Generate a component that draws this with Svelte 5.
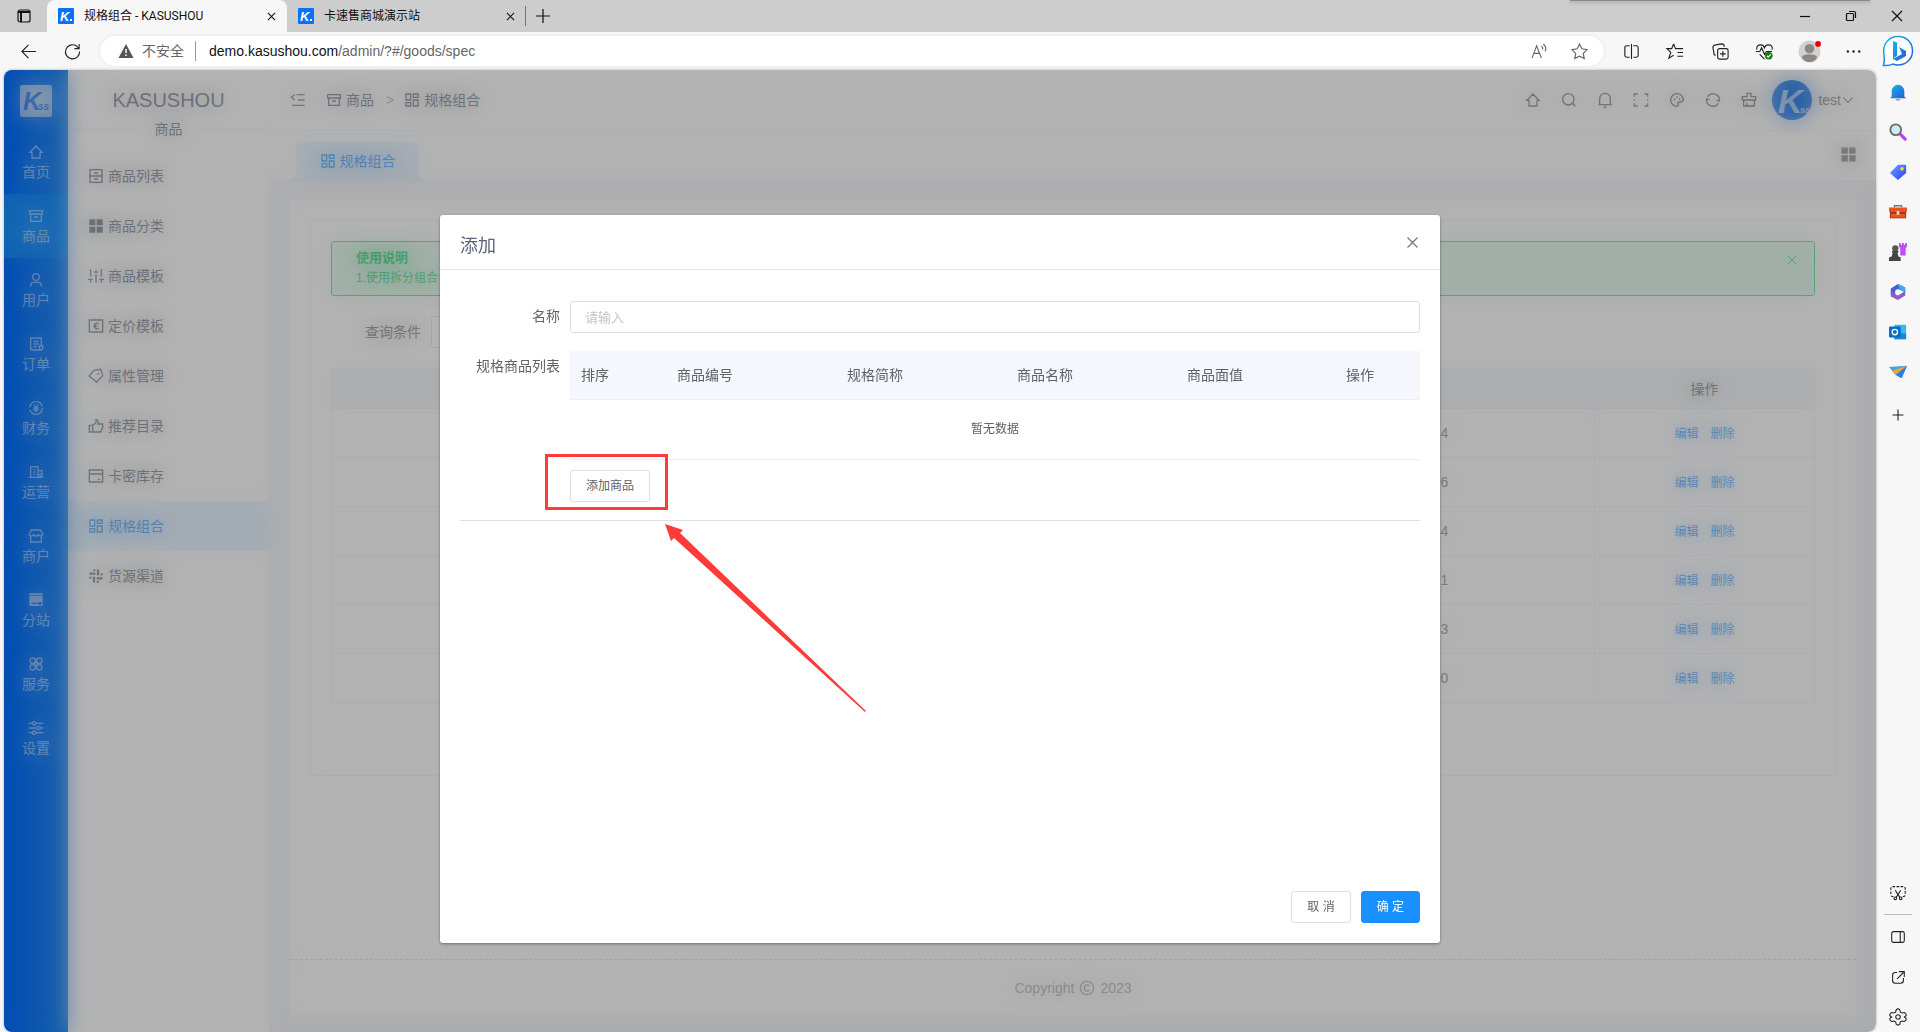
<script>
  const icons = {
    home: '<path d="M3 12.500 12 3l9 9.500h-3V21H6v-8.500z"/>',
    archive: '<path d="M2.500 4h19v5h-19zM4 9v11h16V9M9 13.500h6"/>',
    user: '<circle cx="12" cy="7.500" r="5"/><path d="M4 22v-2q0-4.500 4.500-4.500h7Q20 15.500 20 20v2"/>',
    order: '<path d="M20 15V3H4v15q0 3 3 3h12q3 0 3-3v-3h-5v3q0 3 2 3M8 8h8M8 12h8M8 16h5"/>',
    money: '<circle cx="12" cy="12" r="9.500" stroke-dasharray="26 4"/><path d="m8.500 7 3.500 4 3.500-4M12 11v7M8 12h8M8 15h8"/>',
    building: '<path d="M1 20h22M4 20V4h11v16M15 10h6v10M8 8h3M8 12h3M8 16h3M18 14v6"/>',
    store: '<path d="M4 11v10h16V11M5 3h14l3 6q0 3-3 3t-3.500-3q0 3-3.500 3T8.500 9q0 3-3.500 3T2 9z"/>',
    station: '<path fill="currentColor" stroke="none" d="M2 2h20v3H2zM2 6h20v15H2z"/><path stroke="#1380fb" d="M5 17h9M16 16h3v2h-3z"/>',
    command: '<circle cx="7" cy="7" r="4"/><circle cx="17" cy="7" r="4"/><circle cx="7" cy="17" r="4"/><circle cx="17" cy="17" r="4"/><path d="M10 10h4v4h-4z"/>',
    sliders: '<path d="M1 5h5m6 0h11M1 12h12m6 0h4M1 19h5m6 0h11"/><circle cx="9" cy="5" r="2.500"/><circle cx="16" cy="12" r="2.500"/><circle cx="9" cy="19" r="2.500"/>',
    drawers: '<path d="M3 2.500h18v19H3zM3 12h18M9 7.500h6M9 16.500h6"/>',
    grid: '<path fill="currentColor" stroke="none" d="M2 2h9v9H2zM13 2h9v9h-9zM2 13h9v9H2zM13 13h9v9h-9z"/>',
    equalizer: '<path d="M4 2v11M4 18v4M0 17h7M12 2v1M12 9v13M9 6h6M20 2v11M20 18v4M17 17h7"/>',
    price: '<path d="M2 3h20v18H2zM16 9q-5-3.500-6.500 3 1.500 6.500 6.500 3M8 12h6"/>',
    tag: '<path d="M1.500 12 9 3.500l10-1.500 3 9.500-9 9.500zM15 7.500v2.500"/>',
    thumb: '<path d="M2 11h5v10H2zM7 11l5-4V2q4 0 3 7h7v5l-3 7H7"/>',
    card: '<path d="M2 3h20v18H2zM2 9h20M15 17h3"/>',
    blocks: '<path d="M3 3h7v9H3zM14 3h7v5h-7zM3 16h7v5H3zM14 12h7v9h-7z"/>',
    slack: '<path stroke-width="3.500" stroke-linecap="round" d="M9.500 8.500h-6M9.500 3.500h.1M15 3.500v6M20.500 9.500h.1M14.500 15.500h6M14.500 20.500h.1M9 14.500v6M3.500 14.500h.1"/>',
    fold: '<path d="M10 4h12M12 12h10M3 20h19M7 4 2 8l5 4"/>',
    search: '<circle cx="11" cy="11" r="8.500"/><path d="m17 17 4.500 4.500"/>',
    bell: '<path d="M4 19V10a8 8 0 0 1 16 0v9M2 19h20M10 22.500h4"/>',
    full: '<path d="M2 7V3h5M17 3h5v4M22 17v4h-5M7 21H2v-4M2 11v2M22 11v2"/>',
    palette: '<path d="M12 2.500a9.500 9.500 0 0 1 9.500 8.500q0 4-4.500 4h-2q-2.500 0-1 3 0 3.500-2 3.500A9.500 9.500 0 0 1 12 2.500zM8 10v2.500M12 6.500V9M16 9v2.500"/>',
    refresh: '<path d="M4 7a9.500 9.500 0 0 1 17.500 6M20 17a9.500 9.500 0 0 1-17.500-6M2 14l1-4 4 2M22 10l-1 4-4-2"/>',
    brush: '<path d="M9 7V2h6v5h7v5H2V7zM4 12v9h16v-9M9 21v-5"/>',
    down: '<path d="m4 8 8 8 8-8"/>',
    close: '<path d="m4 4 16 16M20 4 4 20"/>'
  };
  const nav = [
    ['home', '首页'], ['archive', '商品'], ['user', '用户'], ['order', '订单'], ['money', '财务'],
    ['building', '运营'], ['store', '商户'], ['station', '分站'], ['command', '服务'], ['sliders', '设置']
  ];
  const sub = [
    ['drawers', '商品列表'], ['grid', '商品分类'], ['equalizer', '商品模板'], ['price', '定价模板'], ['tag', '属性管理'],
    ['thumb', '推荐目录'], ['card', '卡密库存'], ['blocks', '规格组合'], ['slack', '货源渠道']
  ];
  const tools = [
    ['home', '首页'], ['search', '搜索'], ['bell', '通知'], ['full', '全屏'],
    ['palette', '主题'], ['refresh', '刷新'], ['brush', '清理']
  ];
  const rows = [4, 6, 4, 1, 3, 0];
  const columns = ['排序', '商品编号', '规格简称', '商品名称', '商品面值', '操作'];
  const tabs = [['规格组合 - KASUSHOU', true], ['卡速售商城演示站', false]];
  const apps = ['通知', '搜索', '购物', '工具', '游戏', 'Microsoft 365', 'Outlook', 'Drop'];
  const appArt = [
    '<path fill="url(#blue)" d="M3 15V9a7 7 0 0 1 14 0v6l2 2H1z"/><path fill="#777" d="M7 18h6q-3 3-6 0z"/>',
    '<path stroke="#c23cf0" stroke-width="3.500" stroke-linecap="round" d="m13 13 5 5"/><circle cx="7.500" cy="7.500" r="6" fill="#cdeafb" stroke="#666" stroke-width="2"/>',
    '<path fill="url(#indigo)" d="m1 11 9-9h8q1 0 1 1v8l-9 8z"/><circle cx="14.500" cy="6.500" r="2" fill="#ffd34d"/>',
    '<path stroke="#777" stroke-width="1.500" d="M6 5V3h8v2"/><path fill="#a92c10" d="M1 9h18v8H1z"/><path fill="#e8551d" d="M0 5h20v5H0zM2 12h16v4H2z"/><path fill="#ddd" d="M8.500 9h3v4h-3z"/>',
    '<path fill="#c04df5" d="M11 0h2v2h1.500V0h2v2H18V0h2v4l-1.500 2v8h-6V6L11 4z"/><circle cx="7" cy="6" r="3.500" fill="#555"/><path fill="#444" d="M3 9h8l-1.500 2 1 4 2.500 1v4H0v-4l3-1 1-4z"/>',
    '<path fill="#4b5fd0" d="m10 1 8 4v5l-8-3-3 2v6l-5-3V6z"/><path fill="#38b0ee" d="m10 1 8 4v6l-6-4z"/><path fill="#8d5bd0" d="M18 9v5l-8 5-8-4V8l4 4 4 2z"/><circle cx="10" cy="10" r="3" fill="#f7f7f7"/>',
    '<path fill="#35b8f1" d="M6 2h13v16H6z"/><path fill="#1686d9" d="m6 11 13 1v6H6z"/><rect y="4" width="13" height="12" rx="1" fill="#0a6cc9"/><circle cx="6.500" cy="10" r="3" stroke="#fff" stroke-width="1.500"/>',
    '<path fill="#3ba4ee" d="M0 4.500 20 3l-6 14-6-3z"/><path fill="#f5a623" d="M3 9 20 3 7 13z"/><path fill="#2b7de9" d="M8 13 20 3l-6 14z"/>'
  ];
  const bar = [
    ['分屏', '<path d="M8 4H5Q3 4 3 6v8q0 2 2 2h3M12 4h3q2 0 2 2v8q0 2-2 2h-3M10 2v16"/>'],
    ['收藏夹', '<path d="m8 2 2 5h8M8 2 6 7H1l4 4-2 6 5-3M12 11h6M12 15h6"/>'],
    ['集锦', '<rect x="7" y="7" width="11" height="11" rx="2"/><path d="M12.500 9.500v6M9.500 12.500h6M5 14q-2 0-2-3L2 6q0-3 3-3l6-1q3 0 3 3"/>'],
    ['性能', '<path d="M2 8q-1-5 4-5 3 0 4 3 1-3 4-3 5 0 4 5M1 10h4l2-4 3 7 2-3h6M5 13l5 5"/><circle cx="14.500" cy="14.500" r="4" fill="#107c10" stroke="none"/><path stroke="#fff" d="m12.500 14.500 1.500 1.500 2.500-3"/>'],
    ['用户', '<circle cx="10" cy="10" r="11.500" fill="#d3d1cf" stroke="none"/><circle cx="10" cy="7" r="5" fill="#8b8785" stroke="none"/><path fill="#8b8785" stroke="none" d="M2 16q1-3 8-3t8 3q-2 5-8 5t-8-5z"/><circle cx="19" cy="2" r="3" fill="#e80000" stroke="none"/>'],
    ['更多', '<path stroke-width="2.500" stroke-linecap="round" d="M4 10h.1M10 10h.1M16 10h.1"/>']
  ];
</script>

{#snippet icon(name)}
  <svg class="icon" viewBox="0 0 24 24" aria-hidden="true">{@html icons[name]}</svg>
{/snippet}

{#snippet fav()}
  <svg class="fav" viewBox="0 0 16 16" aria-hidden="true">
    <rect width="16" height="16" rx="1" fill="#0b72f5" />
    <text x="2" y="13" font-size="13" class="k" fill="#fff">K</text>
    <path fill="#fff" d="M12 11h2v2h-2z" />
  </svg>
{/snippet}

<div class="window">
  <header class="strip">
    <button class="pane" aria-label="标签操作">
      <svg viewBox="0 0 16 16" class="line"><rect x="2" y="2" width="12" height="12" rx="2" /><path d="M2 4h12M5 5v9" stroke-width="2" /></svg>
    </button>
    {#each tabs as [title, active]}
      <div class="tab" class:active>
        {@render fav()}
        <span>{title}</span>
        <button aria-label="关闭标签页"><svg viewBox="0 0 10 10" class="line"><path d="m1 1 8 8M9 1 1 9" /></svg></button>
      </div>
    {/each}
    <button class="plus" aria-label="新建标签页"><svg viewBox="0 0 14 14" class="line"><path d="M7 0v14M0 7h14" /></svg></button>
    <i class="notch"></i>
    <div class="controls">
      <button aria-label="最小化"><svg viewBox="0 0 10 10" class="line"><path d="M0 5.500h10" /></svg></button>
      <button aria-label="还原"><svg viewBox="0 0 10 10" class="line"><rect x=".5" y="2.500" width="7" height="7" rx="1" /><path d="M3 .5h5q1.500 0 1.500 1.500v5" /></svg></button>
      <button aria-label="关闭"><svg viewBox="0 0 10 10" class="line"><path d="m0 0 10 10M10 0 0 10" /></svg></button>
    </div>
  </header>

  <div class="toolbar">
    <button class="back" aria-label="后退"><svg viewBox="0 0 18 18" class="line"><path d="M17 9H2M9 2 2 9l7 7" /></svg></button>
    <button class="back" aria-label="刷新"><svg viewBox="0 0 18 18" class="line"><path d="M16.500 9A7.500 7.500 0 1 1 13 3l3 3M16 1v5h-5" /></svg></button>
    <div class="address">
      <svg class="warn" viewBox="0 0 16 16"><path fill="#555" d="M8 1 15.500 15H.5z" /><path stroke="#fff" stroke-width="1.500" d="M8 6v4M8 11.500V13" /></svg>
      <span class="unsafe">不安全</span>
      <span class="url"><b>demo.kasushou.com</b>/admin/?#/goods/spec</span>
      <button aria-label="大声朗读"><svg viewBox="0 0 18 18" class="line"><path d="M1 16 6 3l5 13M3 11h6M11 3q2 2 1 4M13 1q4 3 2 8" /></svg></button>
      <button aria-label="收藏"><svg viewBox="0 0 18 18" class="line"><path d="m9 1 2.500 5.200 5.500.8-4 4 1 5.500L9 14l-5 2.500L5 11 1 7l5.500-.8z" /></svg></button>
    </div>
    <div class="extras">
      {#each bar as [name, art]}
        <button aria-label={name}><svg viewBox="0 0 20 20" class="line">{@html art}</svg></button>
      {/each}
    </div>
    <button class="bing" aria-label="Bing">
      <svg viewBox="0 0 32 32">
        <defs><linearGradient id="blue" x2="1" y2="1"><stop stop-color="#16b5ea" /><stop offset="1" stop-color="#2458d8" /></linearGradient><linearGradient id="indigo" x2="1" y2="1"><stop stop-color="#68aaff" /><stop offset="1" stop-color="#3036f0" /></linearGradient></defs>
        <path d="M1.500 30.500Q3 26 2 20C0 9 7 1.500 16 1.500S30.500 8 30.500 16 24 30 16 30q-3 0-5-1-3 2-9.500 1.500z" fill="#fff" stroke="url(#blue)" stroke-width="1.500" />
        <path d="m11 6 4 1.500v13L11 24zM17 12l7 4v5l-9 5-4-2 9-5z" fill="url(#blue)" />
      </svg>
    </button>
  </div>

  <div class="below">
    <div class="page">
      <nav class="rail">
        <svg class="logo" viewBox="0 0 32 32"><rect width="32" height="32" rx="2" fill="#dfe9f6" /><text x="3" y="25" font-size="25" class="k" fill="#1a78ee">K</text><text x="18" y="25" font-size="10" class="k" fill="#1a78ee">ss</text></svg>
        {#each nav as [name, text], i}
          <a href="#{name}" class:on={i === 1}>{@render icon(name)}{text}</a>
        {/each}
      </nav>
      <nav class="menu">
        <h1>KASUSHOU</h1>
        <div class="group"><span>商品</span></div>
        {#each sub as [name, text], i}
          <a href="#{name}" class:on={i === 7}>{@render icon(name)}{text}</a>
        {/each}
      </nav>
      <main>
        <div class="head">
          <button class="fold" aria-label="折叠菜单">{@render icon('fold')}</button>
          <a href="#goods">{@render icon('archive')}商品</a>
          <span class="sep">&gt;</span>
          <a href="#spec">{@render icon('blocks')}规格组合</a>
          <div class="tools">
            {#each tools as [name, text]}<button aria-label={text}>{@render icon(name)}</button>{/each}
          </div>
          <svg class="avatar" viewBox="0 0 40 40"><circle cx="20" cy="20" r="20" fill="#1272e8" /><text x="6" y="33" font-size="34" class="k" fill="#e4eefa">K</text><text x="28" y="33" font-size="9" class="k" fill="#e4eefa">ss</text></svg>
          <button class="account">test{@render icon('down')}</button>
        </div>
        <div class="views">
          <a href="#spec">{@render icon('blocks')}规格组合</a>
          <button aria-label="标签管理">{@render icon('grid')}</button>
        </div>
        <div class="content">
          <div class="sheet">
            <div class="box">
              <div class="alert">
                <div><strong>使用说明</strong><p>1.使用拆分组合</p></div>
                <button aria-label="关闭说明">{@render icon('close')}</button>
              </div>
              <div class="query"><label for="query">查询条件</label><input id="query" /></div>
              <table class="list">
                <colgroup><col /><col class="num" /><col class="ops" /></colgroup>
                <thead><tr><th></th><th></th><th>操作</th></tr></thead>
                <tbody>
                  {#each rows as n}
                    <tr><td></td><td>{n}</td><td><a href="#edit">编辑</a><a href="#delete">删除</a></td></tr>
                  {/each}
                </tbody>
              </table>
            </div>
            <footer>Copyright <svg class="icon" viewBox="0 0 24 24"><circle cx="12" cy="12" r="10" /><path d="M15.500 9q-2-2-4.500-1.500Q8 8.500 8 12t3 4.500q2.500.5 4.500-1.500" /></svg> 2023</footer>
          </div>
        </div>
      </main>

      <div class="veil"></div>
      <div class="layer">
        <div class="dialog" role="dialog" aria-labelledby="title">
          <div class="top"><h2 id="title">添加</h2><button aria-label="关闭">{@render icon('close')}</button></div>
          <form>
            <div class="field"><label for="name">名称</label><input id="name" placeholder="请输入" /></div>
            <div class="field">
              <span class="label">规格商品列表</span>
              <div class="goods">
                <table>
                  <colgroup><col class="c0" /><col /><col /><col /><col /><col class="c5" /></colgroup>
                  <thead><tr>{#each columns as c}<th>{c}</th>{/each}</tr></thead>
                  <tbody><tr><td colspan="6">暂无数据</td></tr></tbody>
                </table>
                <div class="add">
                  <button type="button" class="btn">添加商品</button>
                  <i class="mark"></i>
                  <svg class="arrow" viewBox="0 0 202 188"><path fill="#ff3a3a" d="m0 0 18 6-3 3L201 187l-1 1L9 14l-3 3z" /></svg>
                </div>
              </div>
            </div>
          </form>
          <div class="actions"><button class="btn">取 消</button><button class="btn primary">确 定</button></div>
        </div>
      </div>
    </div>

    <aside>
      {#each apps as name, i}
        <button aria-label={name}><svg viewBox="0 0 20 20" fill="none">{@html appArt[i]}</svg></button>
      {/each}
      <button aria-label="自定义"><svg viewBox="0 0 20 20" class="line"><path d="M10 4v12M4 10h12" /></svg></button>
      <button class="push" aria-label="截图"><svg viewBox="0 0 20 20" class="line"><path stroke-dasharray="3 1.500" d="M5 15H4q-2 0-2-2V6q0-2 2-2h12q2 0 2 2v7q0 2-2 2h-1" /><path d="m7 8 5 8M13 8l-5 8" /><circle cx="7" cy="17" r="1.500" /><circle cx="13" cy="17" r="1.500" /></svg></button>
      <hr />
      <button aria-label="侧栏"><svg viewBox="0 0 20 20" class="line"><rect x="3" y="4" width="14" height="12" rx="2" /><path d="M12.500 4v12" /></svg></button>
      <button aria-label="打开链接"><svg viewBox="0 0 20 20" class="line"><path d="M9 5H7Q4 5 4 8v6q0 3 3 3h6q3 0 3-3v-3M9 12l7-7M11 4h6v6" /></svg></button>
      <button aria-label="设置"><svg viewBox="0 0 20 20" class="line"><path d="M8 2q2-2 4 0l.6 2.600 2 1L17 5q2.500 1 2 3.500L17 10l2 1.500q.5 2.500-2 3.500l-2.400-.6-2 1L12 18q-2 2-4 0l-.6-2.600-2-1L3 15q-2.500-1-2-3.500L3 10 1 8.500Q.5 6 3 5l2.400.6 2-1z" /><circle cx="10" cy="10" r="2.500" /></svg></button>
    </aside>
  </div>
</div>

<style>
  :global(body) { margin: 0; }
  * { box-sizing: border-box; }
  .window { height: 100vh; display: flex; flex-direction: column; background: #f7f7f7; font: 14px/20px "Liberation Sans", "Noto Sans CJK SC", sans-serif; color: #606266; }
  button { border: 0; padding: 0; background: none; color: inherit; font: inherit; display: inline-flex; align-items: center; justify-content: center; }
  a { color: inherit; text-decoration: none; }
  svg { display: block; flex: none; overflow: visible; }
  .icon { width: 16px; height: 16px; fill: none; stroke: currentColor; stroke-width: 2; }
  .line { fill: none; stroke: currentColor; stroke-width: 1.2; }
  .k { font-family: "Liberation Sans", sans-serif; font-weight: bold; font-style: italic; }

  .strip { height: 32px; flex: none; display: flex; align-items: center; background: #cdcdcd; color: #111; font: 12px/16px Roboto, "Noto Sans CJK SC", sans-serif; position: relative; }
  .pane { width: 47px; }
  .pane svg { width: 16px; height: 16px; }
  .tab { width: 240px; height: 32px; padding: 0 10px 0 11px; display: flex; align-items: center; gap: 10px; border-right: 1px solid transparent; }
  .tab.active { background: #f7f7f7; border-radius: 8px 8px 0 0; }
  .tab:not(.active) { width: 239px; border-image: linear-gradient(transparent 20%, #777 20% 80%, transparent 80%) 1; }
  .tab span { flex: 1; white-space: nowrap; }
  .tab button svg { width: 9px; height: 9px; }
  .fav { width: 16px; height: 16px; }
  .plus { width: 34px; }
  .plus svg { width: 14px; height: 14px; }
  .notch { position: absolute; top: 0; right: 50px; width: 300px; height: 1px; background: #888; box-shadow: 0 0 4px #555; }
  .controls { margin-left: auto; display: flex; }
  .controls button { width: 46px; height: 32px; }
  .controls svg { width: 10px; height: 10px; }

  .toolbar { height: 38px; flex: none; display: flex; align-items: center; color: #222; }
  .back { width: 44px; }
  .back:first-child { margin-left: 6px; }
  .back svg { width: 17px; height: 17px; }
  .address { flex: 1; height: 30px; margin: 0 5px 0 6px; padding: 0 5px 0 18px; border-radius: 15px; background: #fff; box-shadow: 0 0 3px #ddd; display: flex; align-items: center; color: #666; }
  .warn { width: 16px; height: 16px; }
  .unsafe { margin-left: 8px; padding-right: 11px; border-right: 1px solid #999; }
  .url { flex: 1; margin-left: 13px; }
  .url b { color: #111; font-weight: normal; }
  .address button { width: 40px; }
  .address button svg { width: 17px; height: 17px; }
  .extras { width: 267px; display: flex; }
  .extras button { flex: 1; }
  .extras svg { width: 19px; height: 19px; }
  .bing { width: 44px; }
  .bing svg { width: 32px; height: 32px; }

  .below { flex: 1; min-height: 0; display: flex; }
  .page { position: relative; flex: 1; min-width: 0; margin-left: 4px; display: flex; overflow: hidden; border-radius: 8px; background: #fff; box-shadow: 0 0 3px #aaa; }
  aside { width: 44px; flex: none; display: flex; flex-direction: column; padding-top: 2px; color: #222; }
  aside button { height: 40px; flex: none; }
  aside svg { width: 18px; height: 18px; }
  aside button:nth-child(9) { margin-top: 3px; }
  .push { margin-top: auto; }
  aside hr { width: 28px; margin: 2px auto; border: 0; border-top: 1px solid #bbb; flex: none; }
  aside button:last-child { margin-bottom: -5px; }

  .rail { width: 64px; flex: none; background: linear-gradient(90deg, #006eff, #2489f4); color: #e6effa; }
  .logo { width: 32px; height: 32px; margin: 15px 16px 13px; }
  .rail a { height: 64px; padding-top: 2px; display: flex; flex-direction: column; align-items: center; justify-content: center; gap: 2px; }
  .rail a.on { background: #1890ff; }
  .menu { width: 202px; flex: none; color: #515a6e; border-right: 1px solid #f3f4f7; }
  h1 { margin: 0; height: 49px; padding-top: 10px; font-size: 20px; font-weight: normal; line-height: 40px; text-align: center; }
  .group { display: flex; align-items: center; height: 20px; margin-bottom: 12px; }
  .group::before, .group::after { content: ""; flex: 1; border-top: 1px solid #eceef2; }
  .group span { width: 68px; text-align: center; }
  .menu a { height: 50px; padding-left: 20px; display: flex; align-items: center; gap: 4px; }
  .menu a.on { color: #1890ff; background: #e8f4ff; }

  main { flex: 1; min-width: 0; display: flex; flex-direction: column; }
  .head { height: 61px; flex: none; display: flex; align-items: center; border-bottom: 1px solid #f0f1f4; padding: 0 21px 0 20px; color: #515a6e; }
  .head a { display: flex; align-items: center; gap: 4px; }
  .fold { margin-right: 20px; }
  .sep { margin: 0 10px 0 12px; color: #999; }
  .tools { margin-left: auto; display: flex; color: #555; }
  .tools button { width: 36px; }
  .avatar { width: 40px; height: 40px; margin: 0 6px 0 5px; }
  .account { color: #666; }
  .account .icon { width: 14px; }
  .views { height: 50px; flex: none; display: flex; align-items: flex-end; justify-content: space-between; padding: 0 19px 0 26px; border-bottom: 1px solid #e8eaee; }
  .views a { position: relative; width: 123px; height: 38px; display: flex; align-items: center; justify-content: center; gap: 4px; border-radius: 6px 6px 0 0; background: #e8f4ff; color: #1890ff; }
  .views a::before, .views a::after { content: ""; position: absolute; bottom: 0; width: 8px; height: 8px; background: radial-gradient(circle at 0 0, transparent 8px, #e8f4ff 8px); }
  .views a::before { right: 100%; }
  .views a::after { left: 100%; background: radial-gradient(circle at 100% 0, transparent 8px, #e8f4ff 8px); }
  .views button { height: 48px; margin-bottom: 2px; color: #777; }
  .views button .icon { width: 17px; height: 17px; }
  .content { flex: 1; padding: 19px 20px 17px; background: #f4f6fa; display: flex; }
  .sheet { flex: 1; min-width: 0; padding: 20px 20px 0; background: #fff; display: flex; flex-direction: column; }
  .box { border: 1px solid #ebeef5; border-radius: 4px; padding: 20px 20px 72px; }
  .alert { height: 55px; border: 1px solid #13ce66; border-radius: 3px; padding: 6px 16px 0 24px; background: #e7faf0; color: #13ce66; display: flex; justify-content: space-between; align-items: flex-start; }
  .alert strong { display: block; font-size: 13px; line-height: 20px; }
  .alert p { margin: 0; font-size: 12px; line-height: 20px; }
  .alert .icon { width: 12px; height: 24px; }
  .query { margin: 20px 0; padding-left: 34px; display: flex; align-items: center; gap: 10px; }
  input { height: 32px; border: 1px solid #dcdfe6; border-radius: 3px; padding: 0 14px; font: inherit; font-size: 13px; background: #fff; color: #606266; }
  input::placeholder { color: #c0c4cc; opacity: 1; }
  table { width: 100%; border-collapse: collapse; table-layout: fixed; text-align: center; }
  th { font-weight: normal; }
  th, td { padding: 0; }
  .list th, .list td { border: 1px solid #ebeef5; }
  .list th { height: 40px; background: #f5f7fa; }
  .list td { height: 49px; }
  .num { width: 300px; }
  .ops { width: 220px; }
  .list a { font-size: 12px; color: #1890ff; margin: 0 6px; }
  footer { height: 56px; margin: auto -20px 0; border-top: 1px dashed #ccc; display: flex; align-items: center; justify-content: center; gap: 5px; color: #999; }

  .veil { position: absolute; inset: 0; opacity: .5; background: rgba(0, 0, 0, .6); backdrop-filter: blur(10px); }
  .layer { position: absolute; inset: 0; display: flex; align-items: flex-start; justify-content: center; }
  .dialog { width: 1000px; max-width: 90%; margin-top: 145px; border-radius: 3px; background: #fff; box-shadow: 0 1px 3px rgba(0, 0, 0, .4); }
  .top { height: 55px; padding: 8px 20px 0; border-bottom: 1px solid #e4e7ed; display: flex; align-items: center; justify-content: space-between; }
  h2 { margin: 0; font-size: 18px; line-height: 24px; font-weight: normal; color: #5a6379; }
  .top button { height: 16px; width: 16px; margin-bottom: 8px; color: #777; }
  .top .icon { width: 15px; height: 15px; }
  form { min-height: 611px; padding: 31px 20px 0; }
  .field { display: flex; gap: 10px; }
  .field > label, .label { width: 100px; flex: none; text-align: right; line-height: 30px; }
  .field > input { flex: 1; }
  .field + .field { margin-top: 18px; padding-bottom: 18px; border-bottom: 1px solid #dcdfe6; }
  .goods { flex: 1; }
  .goods th { height: 48px; background: #f5f7fc; border-bottom: 1px solid #ebeef5; }
  .goods td { height: 60px; border-bottom: 1px solid #ebeef5; font-size: 12px; }
  .c0 { width: 50px; }
  .c5 { width: 120px; }
  .add { position: relative; display: flex; width: max-content; margin-top: 10px; }
  .btn { height: 32px; padding: 0 15px; border: 1px solid #dcdfe6; border-radius: 3px; font-size: 12px; color: #606266; background: #fff; }
  .primary { border-color: #1890ff; background: #1890ff; color: #fff; }
  .mark { position: absolute; inset: -16px -18px -8px -25px; border: 3px solid #ff3a3a; }
  .arrow { position: absolute; left: 95px; top: 54px; width: 202px; height: 188px; }
  .actions { padding: 10px 20px 20px; display: flex; justify-content: flex-end; gap: 10px; }
</style>
